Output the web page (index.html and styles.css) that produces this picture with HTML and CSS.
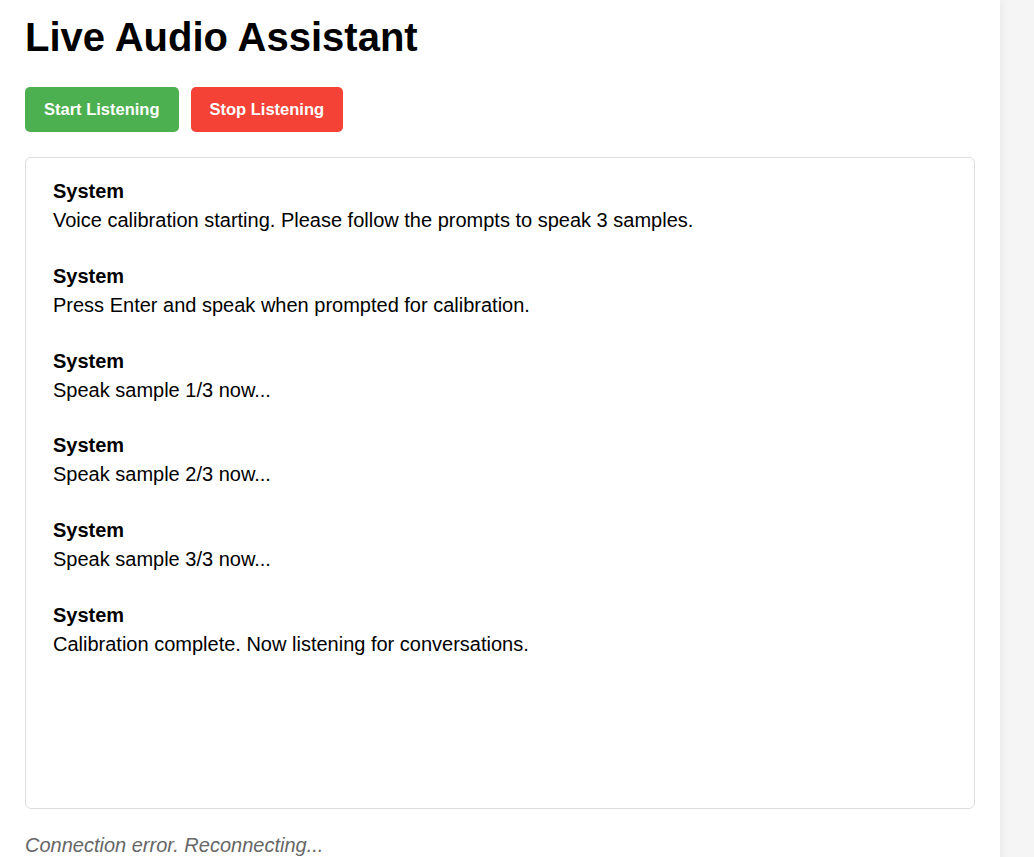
FILE: index.html
```html
<!DOCTYPE html>
<html lang="en">
<head>
<meta charset="utf-8">
<title>Live Audio Assistant</title>
<link rel="stylesheet" href="styles.css">
</head>
<body>
<div class="app">
  <h1 class="title">Live Audio Assistant</h1>
  <div class="controls">
    <button class="btn btn-start">Start Listening</button>
    <button class="btn btn-stop">Stop Listening</button>
  </div>
  <div class="chat">
    <div class="message">
      <div class="sender">System</div>
      <div class="text">Voice calibration starting. Please follow the prompts to speak 3 samples.</div>
    </div>
    <div class="message">
      <div class="sender">System</div>
      <div class="text">Press Enter and speak when prompted for calibration.</div>
    </div>
    <div class="message">
      <div class="sender">System</div>
      <div class="text">Speak sample 1/3 now...</div>
    </div>
    <div class="message">
      <div class="sender">System</div>
      <div class="text">Speak sample 2/3 now...</div>
    </div>
    <div class="message">
      <div class="sender">System</div>
      <div class="text">Speak sample 3/3 now...</div>
    </div>
    <div class="message">
      <div class="sender">System</div>
      <div class="text">Calibration complete. Now listening for conversations.</div>
    </div>
  </div>
  <div class="status">Connection error. Reconnecting...</div>
</div>
</body>
</html>
```
FILE: styles.css
```css
html, body {
  margin: 0;
  padding: 0;
}
body {
  background: #f5f5f5;
  font-family: "Liberation Sans", Arial, sans-serif;
  color: #000;
}
.app {
  width: 1000px;
  box-sizing: border-box;
  padding: 14px 25px 20px;
  background: #fff;
  box-shadow: 0 0 10px rgba(0, 0, 0, 0.07);
  min-height: 100vh;
}
.title {
  font-size: 40px;
  line-height: 46px;
  font-weight: bold;
  margin: 0 0 27px;
}
.controls {
  display: flex;
  gap: 12px;
  margin-bottom: 25px;
}
.btn {
  font-family: "Liberation Sans", Arial, sans-serif;
  font-size: 16.5px;
  font-weight: bold;
  line-height: 20px;
  padding: 12px 19px 13px;
  border: none;
  border-radius: 5px;
  color: #fff;
  cursor: pointer;
}
.btn-start {
  background: #4caf50;
}
.btn-stop {
  background: #f44336;
}
.chat {
  height: 652px;
  box-sizing: border-box;
  border: 1px solid #ddd;
  border-radius: 6px;
  padding: 21px 27px;
  overflow: auto;
  font-size: 20px;
}
.message {
  margin-bottom: 31.8px;
}
.sender {
  font-weight: bold;
  line-height: 24px;
  margin-bottom: 5px;
}
.text {
  line-height: 24px;
}
.status {
  margin-top: 23.6px;
  font-size: 20px;
  line-height: 24px;
  font-style: italic;
  color: #666;
}
```
